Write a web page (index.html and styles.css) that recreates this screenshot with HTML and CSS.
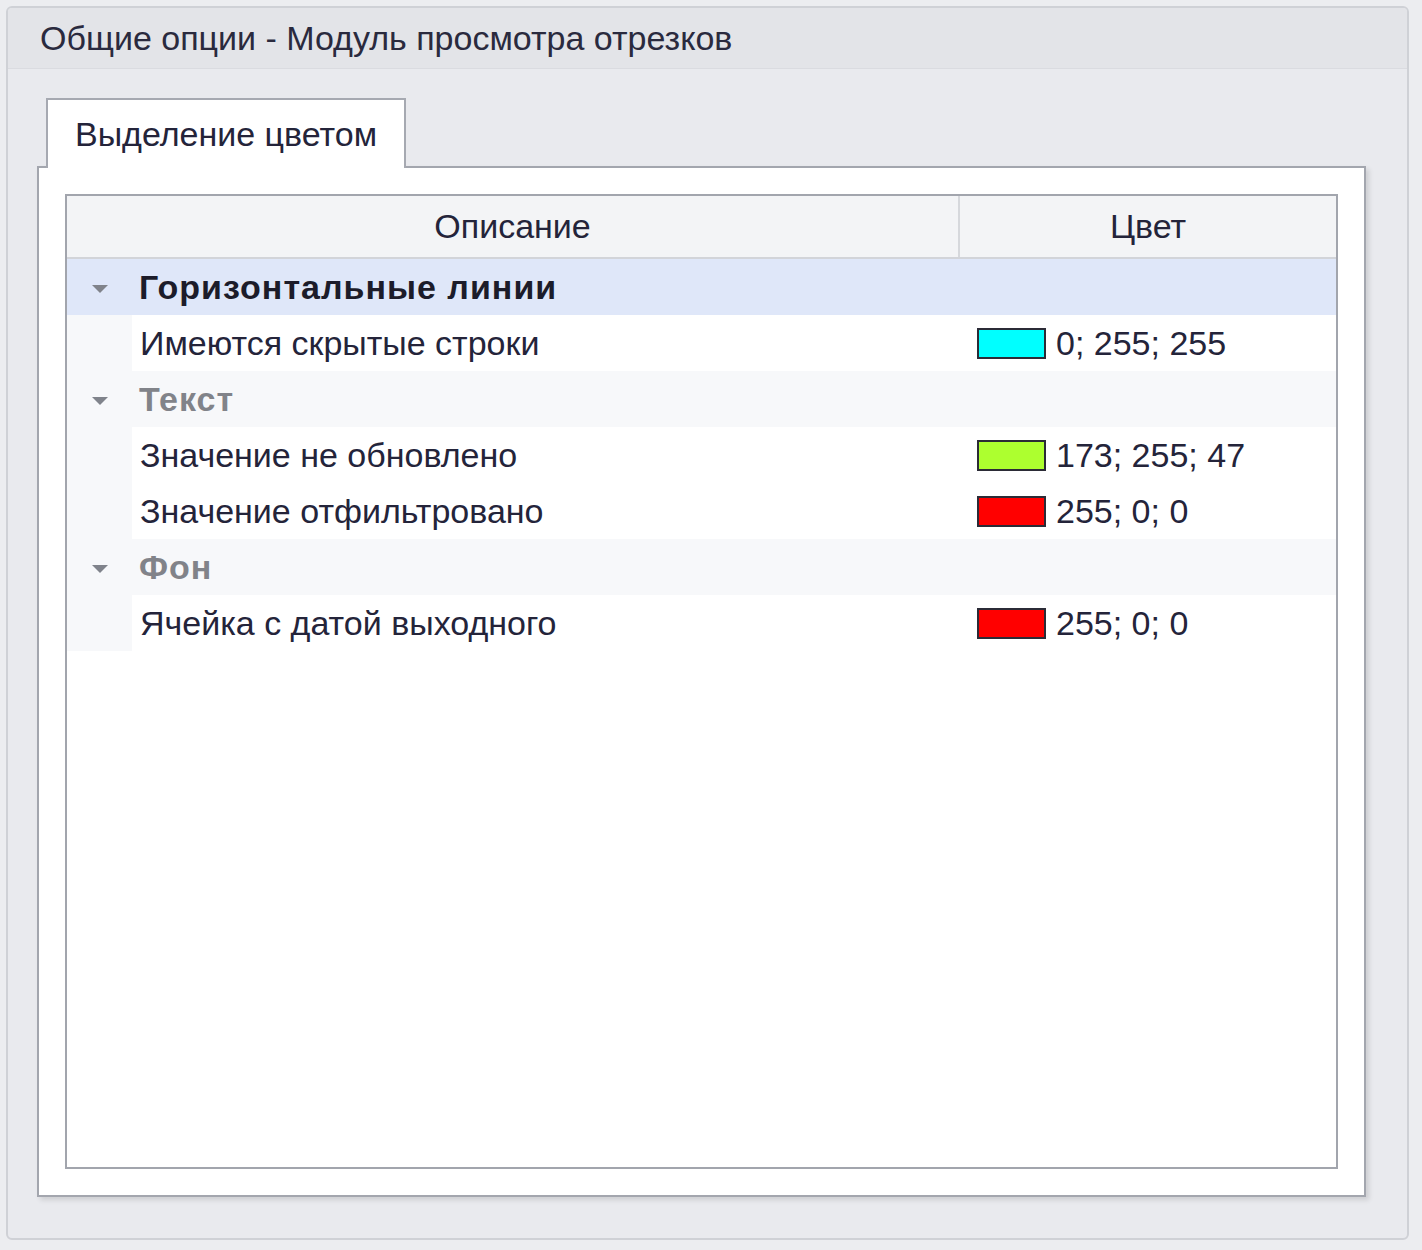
FILE: index.html
```html
<!DOCTYPE html>
<html lang="ru">
<head>
    <meta charset="UTF-8">
    <title>Общие опции - Модуль просмотра отрезков</title>
    <link rel="stylesheet" href="styles.css">
</head>
<body>
    <div class="group">
        <div class="group-header">Общие опции - Модуль просмотра отрезков</div>

        <div class="group-body">
            <!-- Tabs -->
            <div class="tab-strip">
                <div class="tab active">Выделение цветом</div>
            </div>

            <div class="tab-page">
                <!-- Tree list -->
                <div class="tree">
                    <div class="tree-head">
                        <div class="th th-desc">Описание</div>
                        <div class="th th-color">Цвет</div>
                    </div>

                    <div class="tree-row group-row focused">
                        <div class="expander"><span class="arrow"></span></div>
                        <div class="group-title">Горизонтальные линии</div>
                    </div>
                    <div class="tree-row">
                        <div class="indent"></div>
                        <div class="cell-desc">Имеются скрытые строки</div>
                        <div class="cell-color"><span class="swatch cyan"></span>0; 255; 255</div>
                    </div>

                    <div class="tree-row group-row">
                        <div class="expander"><span class="arrow"></span></div>
                        <div class="group-title muted">Текст</div>
                    </div>
                    <div class="tree-row">
                        <div class="indent"></div>
                        <div class="cell-desc">Значение не обновлено</div>
                        <div class="cell-color"><span class="swatch green"></span>173; 255; 47</div>
                    </div>
                    <div class="tree-row">
                        <div class="indent"></div>
                        <div class="cell-desc">Значение отфильтровано</div>
                        <div class="cell-color"><span class="swatch red"></span>255; 0; 0</div>
                    </div>

                    <div class="tree-row group-row">
                        <div class="expander"><span class="arrow"></span></div>
                        <div class="group-title muted">Фон</div>
                    </div>
                    <div class="tree-row">
                        <div class="indent"></div>
                        <div class="cell-desc">Ячейка с датой выходного</div>
                        <div class="cell-color"><span class="swatch red"></span>255; 0; 0</div>
                    </div>
                </div>
            </div>
        </div>
    </div>
</body>
</html>
```

FILE: styles.css
```css
/* General */
html, body {
    height: 100%;
}

body {
    margin: 0;
    background: #ecedf0;
    font-family: "Liberation Sans", Arial, sans-serif;
    font-size: 34px;
    color: #24243a;
    box-sizing: border-box;
    padding: 6px 13px 10px 6px;
}

/* Outer group box */
.group {
    height: 100%;
    box-sizing: border-box;
    display: flex;
    flex-direction: column;
    background: #e9eaee;
    border: 2px solid #cfd1d6;
    border-radius: 6px;
}

.group-header {
    height: 60px;
    flex: none;
    display: flex;
    align-items: center;
    padding-left: 32px;
    background: #e3e4e8;
    border-bottom: 1px solid #dadbe0;
    border-radius: 4px 4px 0 0;
    color: #2a2a3e;
}

.group-body {
    flex: 1;
    display: flex;
    flex-direction: column;
    padding: 29px 41px 41px 29px;
}

/* Tabs */
.tab-strip {
    display: flex;
    padding-left: 9px;
    position: relative;
    z-index: 1;
    margin-bottom: -2px;
}

.tab {
    box-sizing: border-box;
    width: 360px;
    height: 70px;
    padding-left: 27px;
    display: flex;
    align-items: center;
    background: white;
    border: 2px solid #a6a9b1;
    border-bottom: none;
}

.tab-page {
    flex: 1;
    display: flex;
    background: white;
    border: 2px solid #a3a6ae;
    box-shadow: 3px 3px 5px rgba(0, 0, 0, 0.12);
    padding: 26px;
}

/* Tree list */
.tree {
    flex: 1;
    border: 2px solid #a2a5ad;
    background: white;
}

.tree-head {
    display: flex;
    height: 61px;
    background: #f3f4f6;
    border-bottom: 2px solid #d2d4d9;
}

.th {
    display: flex;
    align-items: center;
    justify-content: center;
}

.th-desc {
    width: 891px;
    border-right: 2px solid #d6d8dc;
}

.th-color {
    flex: 1;
}

.tree-row {
    display: flex;
    height: 56px;
    align-items: stretch;
}

.group-row {
    background: #f7f8fa;
}

.group-row.focused {
    background: #dfe7f9;
}

.expander {
    width: 65px;
    display: flex;
    align-items: center;
    justify-content: center;
}

.arrow {
    width: 0;
    height: 0;
    border-left: 8px solid transparent;
    border-right: 8px solid transparent;
    border-top: 8px solid #80838b;
    margin-top: 4px;
}

.group-title {
    display: flex;
    align-items: center;
    padding-left: 7px;
    font-weight: bold;
    letter-spacing: 1px;
    color: #1c1c2a;
}

.group-title.muted {
    color: #818389;
}

.indent {
    width: 65px;
    background: #f7f8fa;
}

.cell-desc {
    width: 819px;
    display: flex;
    align-items: center;
    padding-left: 8px;
}

.cell-color {
    flex: 1;
    display: flex;
    align-items: center;
    padding-left: 18px;
}

.swatch {
    width: 65px;
    height: 27px;
    border: 2px solid #2b2b36;
    margin-right: 10px;
}

.swatch.cyan { background: #00ffff; }
.swatch.green { background: #adff2f; }
.swatch.red { background: #ff0000; }
```
